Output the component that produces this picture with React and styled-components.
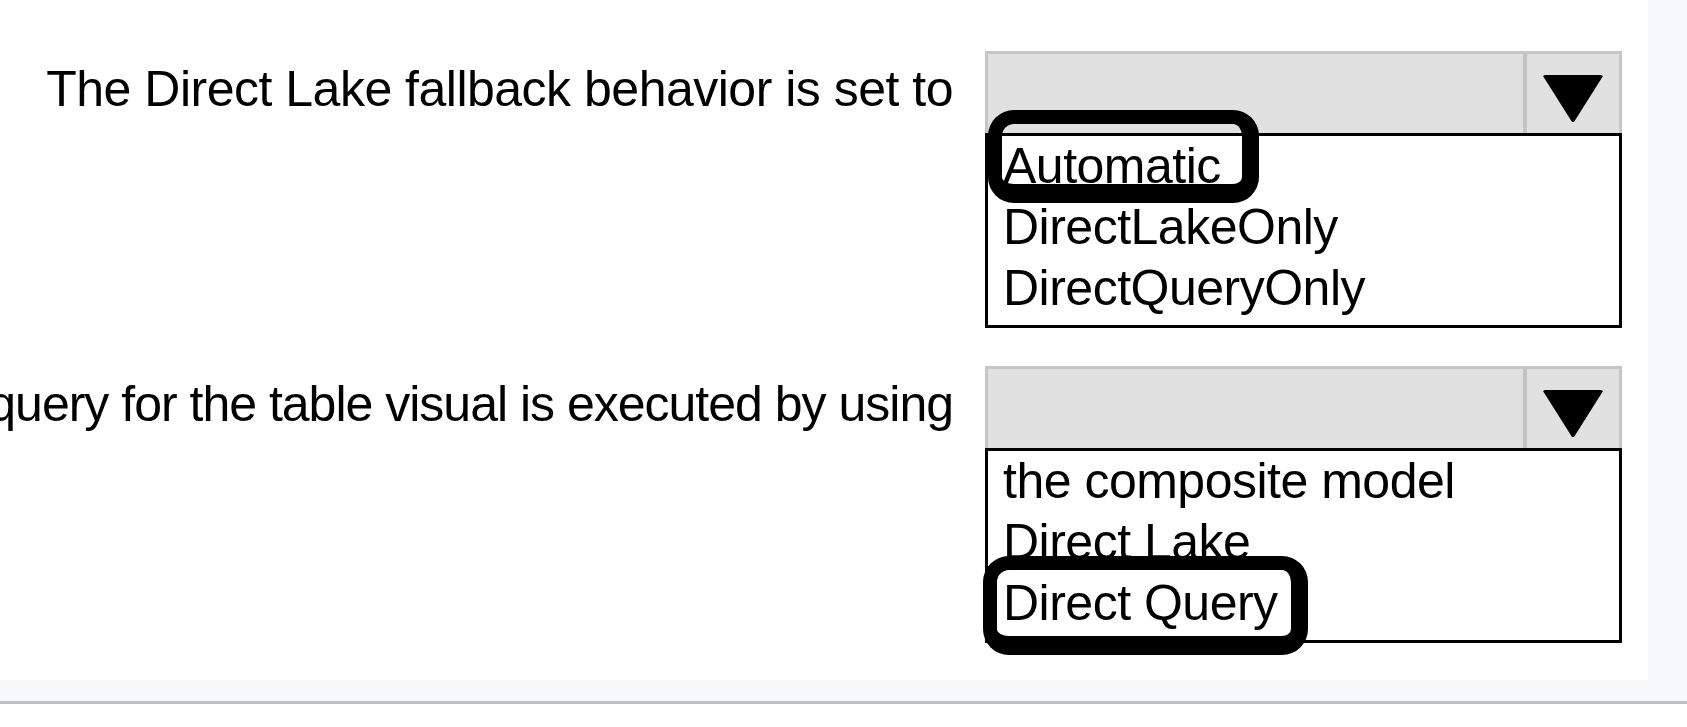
import React from 'react';
import styled, { createGlobalStyle } from 'styled-components';

const GlobalStyle = createGlobalStyle`
	body {
		margin: 0;
		background: #fff;
		font-family: "Liberation Sans", Arial, sans-serif;
		color: #000;
	}
`;

const Frame = styled.div`
	display: flex;
	height: 701px;
	background: #f7f8fa;
	border-bottom: 3px solid #c0c0c0;
`;

const Panel = styled.div`
	width: 1648px;
	height: 680px;
	background: #fff;
	display: flex;
	flex-direction: column;
	gap: 38px;
	padding-top: 51px;
	box-sizing: border-box;
`;

const Row = styled.div`
	display: flex;
	align-items: flex-start;
	gap: 32px;
`;

const LabelCol = styled.div`
	width: 953px;
	display: flex;
	justify-content: flex-end;
	overflow: hidden;
`;

const Label = styled.span`
	flex-shrink: 0;
	white-space: nowrap;
	font-size: 50px;
	line-height: 77px;
	letter-spacing: ${props => props.spacing || -0.5}px;
`;

const Dropdown = styled.div`
	position: relative;
	width: 637px;
`;

const Header = styled.div`
	display: flex;
	height: 82px;
	box-sizing: border-box;
	background: #e1e1e1;
	border: 3px solid #c6c6c6;
	border-bottom: 0;
`;

const Field = styled.div`
	flex: 1;
`;

const ArrowCell = styled.div`
	width: 96px;
	border-left: 4px solid #c3c3c3;
	display: flex;
	justify-content: center;
	padding-top: 21px;
	box-sizing: border-box;
`;

const List = styled.ul`
	list-style: none;
	margin: 0;
	padding: 0 15px 6px;
	border: 3px solid #000;
	font-size: 50px;
	line-height: 61px;
	letter-spacing: -0.5px;
`;

const Item = styled.li`
	white-space: nowrap;
`;

const Highlight = styled.div`
	position: absolute;
	left: ${props => props.left}px;
	top: ${props => props.top}px;
	width: ${props => props.width}px;
	height: ${props => props.height}px;
	box-sizing: border-box;
	border-style: solid;
	border-color: #000;
	border-width: 14px 17px 19px 14px;
	border-radius: 26px;
	pointer-events: none;
`;

const Arrow = () => (
	<svg width="60" height="47" viewBox="0 0 60 47">
		<polygon points="0,1 2,0 58,0 60,1 31,47 29,47" fill="#000" />
	</svg>
);

const Select = ({ options, mark }) => (
	<Dropdown>
		<Header>
			<Field />
			<ArrowCell><Arrow /></ArrowCell>
		</Header>
		<List>
			{options.map(o => <Item key={o}>{o}</Item>)}
		</List>
		<Highlight {...mark} />
	</Dropdown>
);

const questions = [
	{
		label: 'The Direct Lake fallback behavior is set to',
		options: ['Automatic', 'DirectLakeOnly', 'DirectQueryOnly'],
		mark: { left: 3, top: 59, width: 271, height: 93 }
	},
	{
		label: 'The query for the table visual is executed by using',
		spacing: -1,
		options: ['the composite model', 'Direct Lake', 'Direct Query'],
		mark: { left: -2, top: 190, width: 325, height: 99 }
	}
];

const App = () => (
	<>
		<GlobalStyle />
		<Frame>
			<Panel>
				{questions.map(q => (
					<Row key={q.label}>
						<LabelCol>
							<Label spacing={q.spacing}>{q.label}</Label>
						</LabelCol>
						<Select options={q.options} mark={q.mark} />
					</Row>
				))}
			</Panel>
		</Frame>
	</>
);

export default App;
